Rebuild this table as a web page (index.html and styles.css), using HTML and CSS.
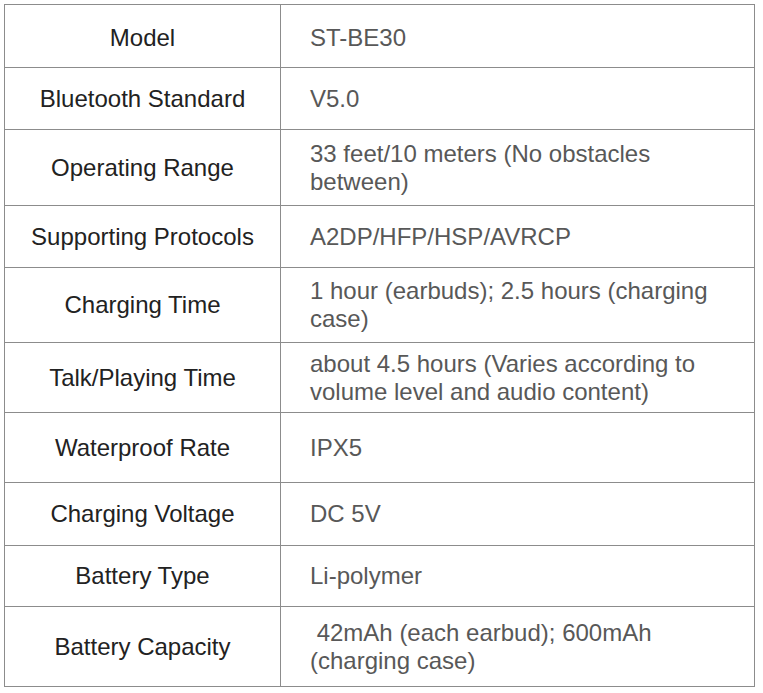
FILE: index.html
```html
<!DOCTYPE html>
<html lang="en">
<head>
<meta charset="utf-8">
<title>Specifications</title>
<link rel="stylesheet" href="styles.css">
</head>
<body>
<div class="wrap">
<table class="spec">
<tbody>
<tr class="r63 first"><td class="k">Model</td><td class="v">ST-BE30</td></tr>
<tr class="r62"><td class="k">Bluetooth Standard</td><td class="v">V5.0</td></tr>
<tr class="r76"><td class="k">Operating Range</td><td class="v">33 feet/10 meters (No obstacles between)</td></tr>
<tr class="r62"><td class="k">Supporting Protocols</td><td class="v">A2DP/HFP/HSP/AVRCP</td></tr>
<tr class="r75"><td class="k">Charging Time</td><td class="v">1 hour (earbuds); 2.5 hours (charging case)</td></tr>
<tr class="r70"><td class="k">Talk/Playing Time</td><td class="v">about 4.5 hours (Varies according to volume level and audio content)</td></tr>
<tr class="r70"><td class="k">Waterproof Rate</td><td class="v">IPX5</td></tr>
<tr class="r63"><td class="k">Charging Voltage</td><td class="v">DC 5V</td></tr>
<tr class="r61"><td class="k">Battery Type</td><td class="v">Li-polymer</td></tr>
<tr class="r80"><td class="k">Battery Capacity</td><td class="v">&nbsp;42mAh (each earbud); 600mAh (charging case)</td></tr>
</tbody>
</table>
</div>
</body>
</html>
```
FILE: styles.css
```css
html, body {
  margin: 0;
  padding: 0;
  background: #ffffff;
}
.wrap {
  padding: 4px 8px 0 4px;
}
.spec {
  border-collapse: collapse;
  width: 751px;
  table-layout: fixed;
  font-family: "Liberation Sans", Arial, sans-serif;
  font-size: 24px;
  line-height: 28px;
}
.spec td {
  border: 1px solid #8c8c8c;
  vertical-align: middle;
  padding: 0;
}
.spec .first td {
  padding-top: 3px;
}
.spec .k {
  width: 275px;
  text-align: center;
  color: #222222;
}
.spec .v {
  text-align: left;
  color: #585858;
  padding: 0 30px 0 29px;
}
.r61 { height: 61px; }
.r62 { height: 62px; }
.r63 { height: 63px; }
.r69 { height: 69px; }
.r70 { height: 70px; }
.r75 { height: 75px; }
.r76 { height: 76px; }
.r80 { height: 80px; }
```
